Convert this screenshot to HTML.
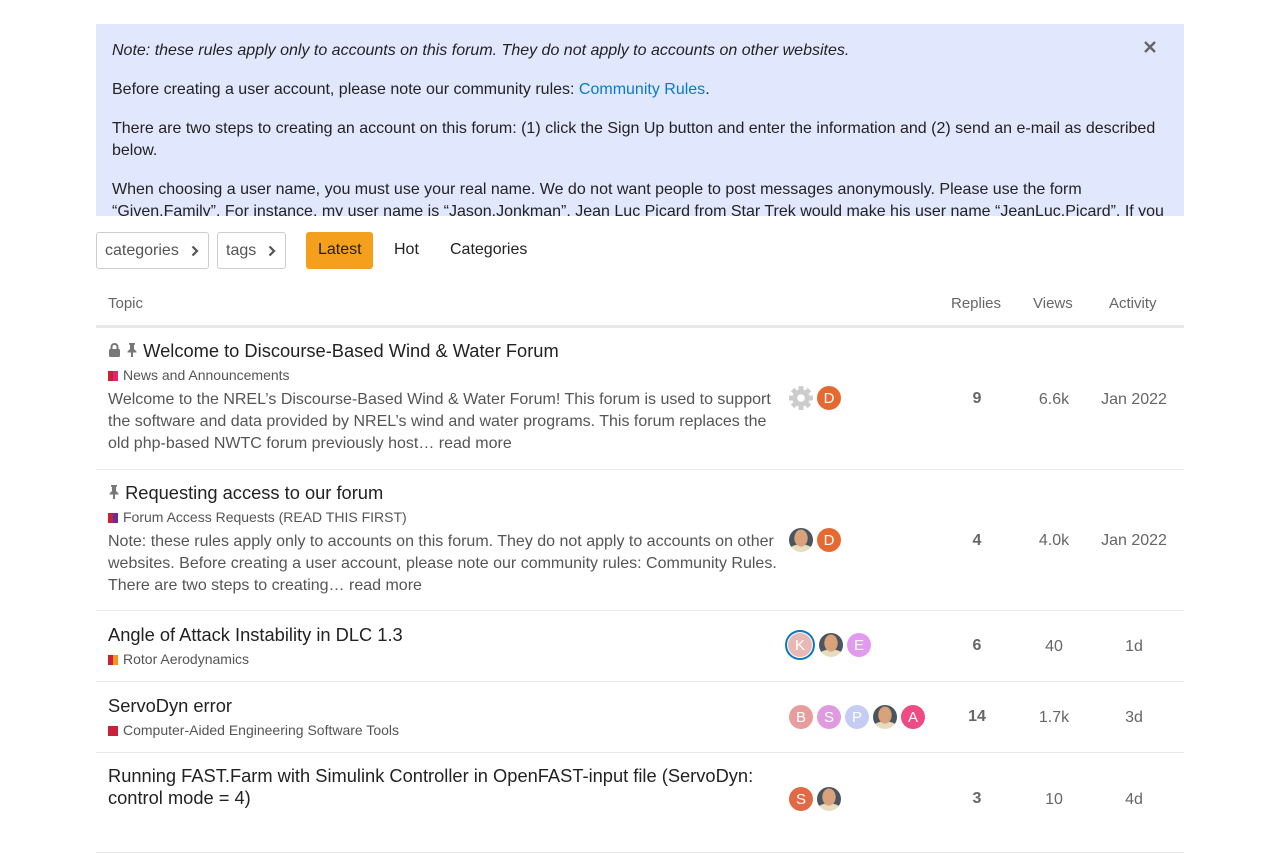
<!DOCTYPE html>
<html><head><meta charset="utf-8"><style>
*{box-sizing:border-box;margin:0;padding:0}
body{width:1280px;height:800px;overflow:hidden;background:#fff;font-family:"Liberation Sans",sans-serif;color:#222;font-size:15px}
.banner{position:absolute;left:96px;top:24px;width:1088px;height:192px;background:#e1e8fe;overflow:hidden;padding:16px 16px 0 16px;line-height:22px;font-size:16px}
.banner p{margin-bottom:17px}
.banner a{color:#0a7ac7;text-decoration:none}
.x{position:absolute;right:27px;top:16px}
.nav{position:absolute;top:232px;left:96px;height:37px}
.dd{position:absolute;top:0;height:37px;border:1px solid #ccc;border-radius:3px;color:#555;padding:0 8px;line-height:35px;font-size:16px}
.dd svg{position:absolute;right:9px;top:12px}
.tab{position:absolute;top:0;height:37px;line-height:35px;padding:0 12px;font-size:16px;color:#222;border-radius:3px}
.hdr{position:absolute;top:281px;left:96px;width:1088px;height:47px;border-bottom:3px solid #e9e9e9;color:#666;font-size:15px}
.hdr span{position:absolute;top:14px}
.row{position:absolute;left:96px;width:1088px;border-bottom:1px solid #e9e9e9}
.t{position:absolute;left:12px;font-size:18.3px;color:#222}
.t svg{vertical-align:0}
.cat{position:absolute;left:12px;font-size:14px;color:#555}
.cat i{display:inline-block;width:10px;height:10px;margin-right:5px;vertical-align:-1px}
.ex{position:absolute;left:12px;width:675px;font-size:16px;line-height:22px;color:#555}
.num{position:absolute;font-size:16px;color:#666;text-align:center;width:80px}
.b{font-weight:bold;color:#666}
.av{position:absolute;width:24px;height:24px;border-radius:50%;color:#fff;font-size:15px;text-align:center;line-height:25px;overflow:hidden}
.ph{background:radial-gradient(ellipse 7px 9px at 50% 42%,#d9a27b 0 90%,transparent 100%),radial-gradient(ellipse 14px 8px at 50% 100%,#e8dcc0 0 90%,transparent 100%),#4a5560}
</style></head><body>
<div class="banner">
<p style="font-style:italic">Note: these rules apply only to accounts on this forum. They do not apply to accounts on other websites.</p>
<p>Before creating a user account, please note our community rules: <a>Community Rules</a>.</p>
<p>There are two steps to creating an account on this forum: (1) click the Sign Up button and enter the information and (2) send an e-mail as described below.</p>
<p>When choosing a user name, you must use your real name. We do not want people to post messages anonymously. Please use the form “Given.Family”. For instance, my user name is “Jason.Jonkman”. Jean Luc Picard from Star Trek would make his user name “JeanLuc.Picard”. If you</p>
<svg class="x" width="14" height="14" viewBox="0 0 14 14"><path d="M2 2L12 12M12 2L2 12" stroke="#666" stroke-width="2.4"/></svg>
</div>
<div class="nav">
<div class="dd" style="left:0;width:113px">categories <svg width="8" height="12" viewBox="0 0 8 12"><path d="M1.5 1.5L6 6L1.5 10.5" stroke="#555" stroke-width="2.2" fill="none"/></svg></div>
<div class="dd" style="left:121px;width:69px">tags <svg width="8" height="12" viewBox="0 0 8 12"><path d="M1.5 1.5L6 6L1.5 10.5" stroke="#555" stroke-width="2.2" fill="none"/></svg></div>
<div class="tab" style="left:210px;background:#f5a01c;width:67px">Latest</div>
<div class="tab" style="left:286px">Hot</div>
<div class="tab" style="left:342px">Categories</div>
</div>
<div class="hdr"><span style="left:12px">Topic</span><span style="left:855px">Replies</span><span style="left:937px">Views</span><span style="left:1013px">Activity</span></div>

<div class="row" style="top:328px;height:142px">
<div class="t" style="top:12px"><svg width="13" height="14" viewBox="0 0 13 14"><path d="M3.5 6V4a3 3 0 0 1 6 0v2" stroke="#777" stroke-width="2" fill="none"/><rect x="1" y="6" width="11" height="8" rx="1.5" fill="#777"/></svg> <svg width="12" height="14" viewBox="0 0 12 14"><path d="M3 0h6v1.5l-1 .5v4l2.5 2.5v1H7v4.5L6 14l-1-.0V9.5H1.5v-1L4 6V2l-1-.5z" fill="#777"/></svg> Welcome to Discourse-Based Wind &amp; Water Forum</div>
<div class="cat" style="top:39px"><i style="background:linear-gradient(90deg,#c8213a 50%,#e8246f 50%)"></i>News and Announcements</div>
<div class="ex" style="top:61px">Welcome to the NREL’s Discourse-Based Wind &amp; Water Forum! This forum is used to support the software and data provided by NREL’s wind and water programs. This forum replaces the old php-based NWTC forum previously host… read more</div>
<svg style="position:absolute;left:692px;top:57px" width="26" height="26" viewBox="0 0 24 24"><g fill="#ccc"><circle cx="12" cy="12" r="8"/><g stroke="#ccc" stroke-width="4.5"><path d="M12 1v22M1 12h22M4.2 4.2l15.6 15.6M19.8 4.2L4.2 19.8"/></g></g><circle cx="12" cy="12" r="3.5" fill="#fff"/></svg>
<div class="av" style="left:721px;top:58px;background:#e56a31">D</div>
<div class="num b" style="left:841px;top:62px">9</div><div class="num" style="left:918px;top:63px">6.6k</div><div class="num" style="left:998px;top:63px">Jan 2022</div>
</div>

<div class="row" style="top:470px;height:141px">
<div class="t" style="top:12px"><svg width="12" height="14" viewBox="0 0 12 14"><path d="M3 0h6v1.5l-1 .5v4l2.5 2.5v1H7v4.5L6 14l-1-.0V9.5H1.5v-1L4 6V2l-1-.5z" fill="#777"/></svg> Requesting access to our forum</div>
<div class="cat" style="top:39px"><i style="background:linear-gradient(90deg,#c8213a 50%,#6a2aa0 50%)"></i>Forum Access Requests (READ THIS FIRST)</div>
<div class="ex" style="top:61px">Note: these rules apply only to accounts on this forum. They do not apply to accounts on other websites. Before creating a user account, please note our community rules: Community Rules. There are two steps to creating… read more</div>
<div class="av ph" style="left:693px;top:58px"></div>
<div class="av" style="left:721px;top:58px;background:#e56a31">D</div>
<div class="num b" style="left:841px;top:62px">4</div><div class="num" style="left:918px;top:62px">4.0k</div><div class="num" style="left:998px;top:62px">Jan 2022</div>
</div>

<div class="row" style="top:611px;height:71px">
<div class="t" style="top:13px">Angle of Attack Instability in DLC 1.3</div>
<div class="cat" style="top:40px"><i style="background:linear-gradient(90deg,#c8213a 50%,#f7941d 50%)"></i>Rotor Aerodynamics</div>
<div class="av" style="left:689px;top:19px;width:30px;height:30px;line-height:27px;border:2px solid #0a7ac7;background:#e8b9b4;box-shadow:inset 0 0 0 1px #fff">K</div>
<div class="av ph" style="left:723px;top:22px"></div>
<div class="av" style="left:751px;top:22px;background:#e29af0">E</div>
<div class="num b" style="left:841px;top:26px">6</div><div class="num" style="left:918px;top:27px">40</div><div class="num" style="left:998px;top:27px">1d</div>
</div>

<div class="row" style="top:682px;height:71px">
<div class="t" style="top:13px">ServoDyn error</div>
<div class="cat" style="top:40px"><i style="background:#c8213a"></i>Computer-Aided Engineering Software Tools</div>
<div class="av" style="left:693px;top:23px;background:#e89c9c">B</div>
<div class="av" style="left:721px;top:23px;background:#e09ae0">S</div>
<div class="av" style="left:749px;top:23px;background:#c5cdf5">P</div>
<div class="av ph" style="left:777px;top:23px"></div>
<div class="av" style="left:805px;top:23px;background:#ee4a84">A</div>
<div class="num b" style="left:841px;top:26px">14</div><div class="num" style="left:918px;top:27px">1.7k</div><div class="num" style="left:998px;top:27px">3d</div>
</div>

<div class="row" style="top:753px;height:100px">
<div class="t" style="top:12px;width:675px;line-height:22px">Running FAST.Farm with Simulink Controller in OpenFAST-input file (ServoDyn: control mode = 4)</div>
<div class="av" style="left:693px;top:34px;background:#e06a45">S</div>
<div class="av ph" style="left:721px;top:34px"></div>
<div class="num b" style="left:841px;top:37px">3</div><div class="num" style="left:918px;top:38px">10</div><div class="num" style="left:998px;top:38px">4d</div>
</div>
</body></html>
